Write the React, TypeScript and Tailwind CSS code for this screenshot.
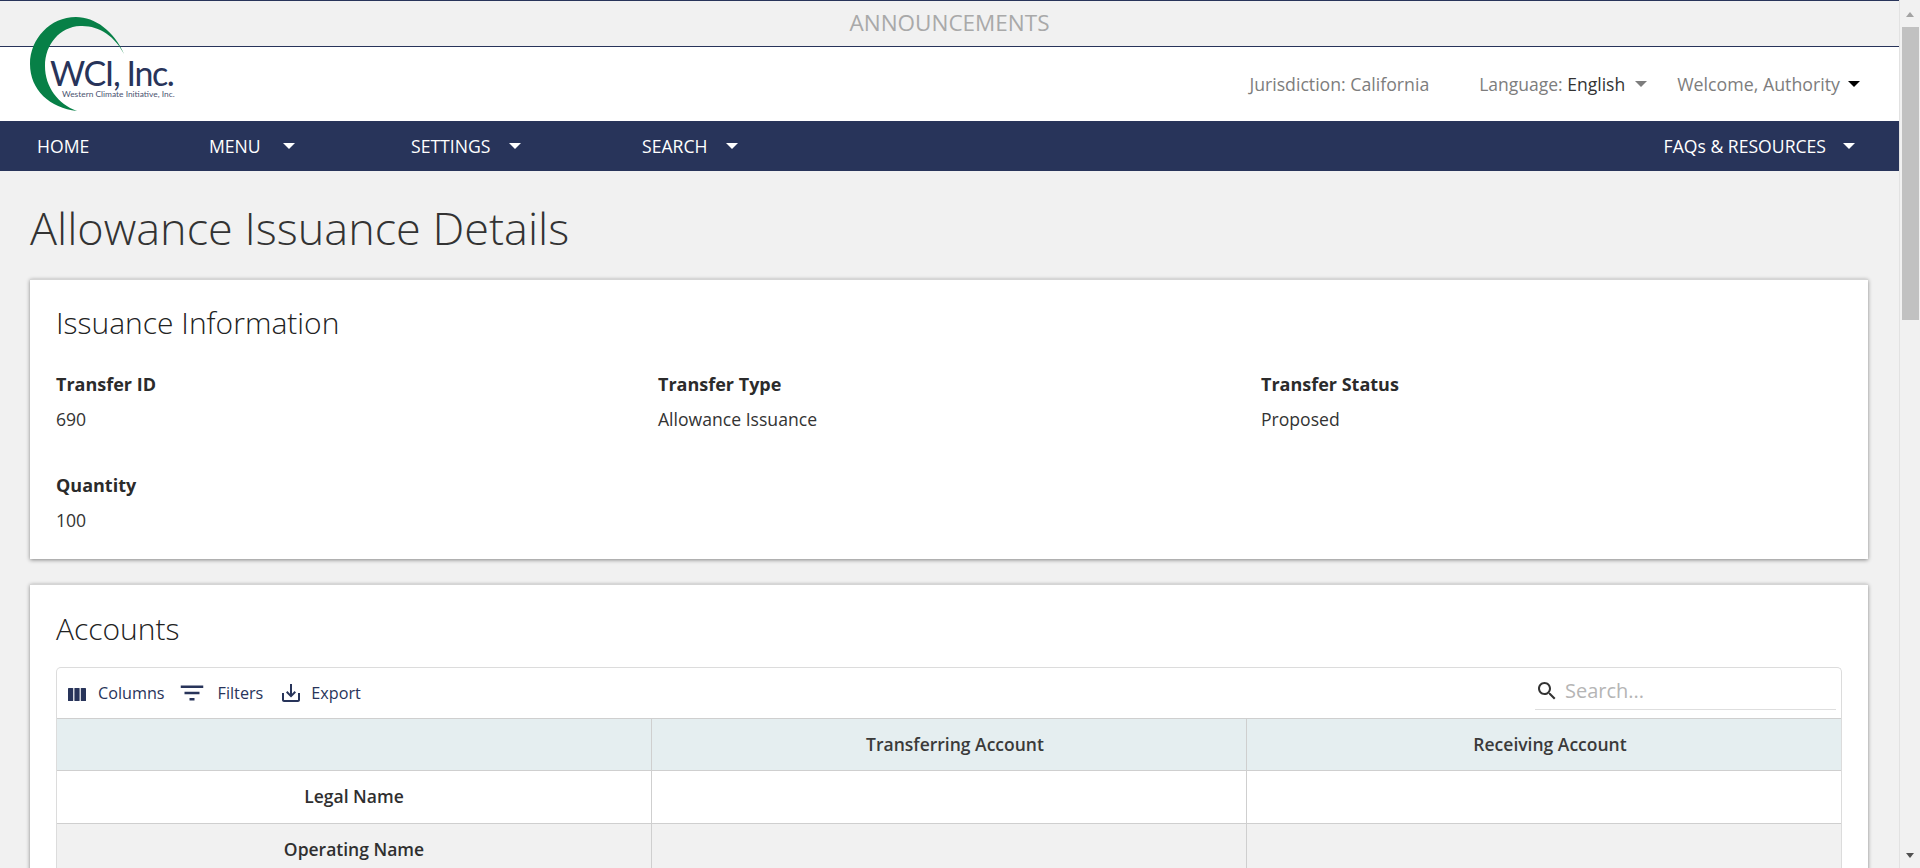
import React from 'react';

const Caret = ({ className = 'border-t-white' }: { className?: string }) => (
  <span className={`inline-block w-0 h-0 border-x-[6.5px] border-x-transparent border-t-[6.5px] ${className}`} />
);

const Logo = () => (
  <div className="absolute left-0 top-0 w-[190px] h-[120px]">
    <svg width="190" height="120" viewBox="0 0 190 120" className="absolute left-0 top-0">
      <path d="M124 54 C114 31 95 17 76 17 C50 17 30 39 30 64 C30 90 50 108 77 111 C58 104 45 87 45 66 C45 44 60 27 80 26 C98 25 115 36 124 54Z" fill="#078047" />
    </svg>
    <span className="absolute left-[50px] top-[57px] text-[34px] leading-[32px] font-['Lato',sans-serif] text-[#28345a] tracking-[-1.4px] whitespace-nowrap">WCI, Inc.</span>
    <span className="absolute left-[62px] top-[89px] text-[8.4px] leading-[11px] font-['Lato',sans-serif] text-[#4a5270] whitespace-nowrap">Western Climate Initiative, Inc.</span>
  </div>
);

const Field = ({ label, value }: { label: string; value: string }) => (
  <div className="h-[101px]">
    <div className="font-bold text-[18px] leading-[22px] text-[#2b2b2b]">{label}</div>
    <div className="mt-[13px] text-[17.6px] leading-[22px] text-[#333]">{value}</div>
  </div>
);

const Row = ({ label, shaded }: { label: string; shaded?: boolean }) => (
  <div className={`grid grid-cols-[595px_595px_1fr] h-[53px] border-b border-[#cfcfcf] text-[17.5px] ${shaded ? 'bg-[#f1f1f1]' : 'bg-white'}`}>
    <div className="flex items-center justify-center pb-[2px] font-semibold text-[#2f2f2f] border-r border-[#cfcfcf]">{label}</div>
    <div className="border-r border-[#cfcfcf]" />
    <div />
  </div>
);

export default function App() {
  return (
    <div className="relative flex h-screen overflow-hidden bg-[#f1f1f1] font-['Open_Sans',sans-serif]">
      <div className="relative flex-1 min-w-0 overflow-hidden">
        <div className="h-[47px] pb-[2px] border-y border-[#28345a] flex items-center justify-center text-[22.5px] text-[#a9a9a9]">ANNOUNCEMENTS</div>
        <header className="h-[74px] bg-white flex items-center justify-end pr-[39px] text-[17.8px] text-[#7d7d7d]">
          <span className="mr-[50px] text-[17.7px]">Jurisdiction: California</span>
          <span className="text-[17.5px]">Language: <span className="text-[#333]">English</span></span>
          <Caret className="border-t-[#7d7d7d] ml-[10px] mr-[30px]" />
          <span>Welcome, Authority</span>
          <Caret className="border-t-black ml-[8px]" />
        </header>
        <nav className="h-[50px] bg-[#28345a] flex items-center text-white text-[17.6px] pl-[37px] pr-[44px]">
          <span className="w-[172px]">HOME</span>
          <span className="w-[202px] flex items-center gap-[22px]">MENU <Caret /></span>
          <span className="w-[231px] flex items-center gap-[19px]">SETTINGS <Caret /></span>
          <span className="flex items-center gap-[19px]">SEARCH <Caret /></span>
          <span className="ml-auto flex items-center gap-[17px]">FAQs &amp; RESOURCES <Caret /></span>
        </nav>
        <main className="pl-[30px] pr-[31px]">
          <h1 className="pt-[30px] pb-[24px] text-[45px] leading-[54px] font-light text-[#333]">Allowance Issuance Details</h1>
          <section className="bg-white h-[280px] px-[26px] pt-[24px] border-t border-[#d5d5d5] shadow-[0_1px_4px_rgba(0,0,0,0.45)]">
            <h2 className="text-[30px] leading-[38px] font-light text-[#222]">Issuance Information</h2>
            <div className="mt-[31px] grid grid-cols-[602px_603px_1fr]">
              <Field label="Transfer ID" value="690" />
              <Field label="Transfer Type" value="Allowance Issuance" />
              <Field label="Transfer Status" value="Proposed" />
              <Field label="Quantity" value="100" />
            </div>
          </section>
          <section className="mt-[25px] bg-white px-[26px] pt-[25px] border-t border-[#d5d5d5] shadow-[0_1px_4px_rgba(0,0,0,0.45)]">
            <h2 className="text-[30px] leading-[38px] font-light text-[#222]">Accounts</h2>
            <div className="mt-[19px] border border-[#dcdcdc] rounded-t-[5px] border-b-0 w-[1786px]">
              <div className="h-[50px] flex items-center pl-[11px] pr-[5px] text-[#28345a] text-[16.2px]">
                <svg width="18" height="14" viewBox="0 0 18 14" className="mr-[12px] mt-[3px]" fill="#28345a">
                  <rect x="0" y="0" width="5.2" height="13" rx="0.6" />
                  <rect x="6.4" y="0" width="5.2" height="13" rx="0.6" />
                  <rect x="12.8" y="0" width="5.2" height="13" rx="0.6" />
                </svg>
                <span className="mt-[1px]">Columns</span>
                <svg width="30" height="30" viewBox="0 0 24 24" className="ml-[12px] mr-[11px]" fill="#28345a">
                  <path d="M10 18h4v-2h-4v2zM3 6v2h18V6H3zm3 7h12v-2H6v2z" />
                </svg>
                <span className="mt-[1px]">Filters</span>
                <svg width="24" height="24" viewBox="0 0 24 24" className="ml-[16px] mr-[8px]" fill="#28345a">
                  <path d="M19 12v7H5v-7H3v7c0 1.1.9 2 2 2h14c1.1 0 2-.9 2-2v-7h-2zm-6 .67l2.59-2.58L17 11.5l-5 5-5-5 1.41-1.41L11 12.67V3h2z" />
                </svg>
                <span className="mt-[1px]">Export</span>
                <div className="ml-auto w-[301px] h-[37px] border-b border-[#dedede] flex items-center -mt-[3px]">
                  <svg width="24" height="24" viewBox="0 0 24 24" fill="#333">
                    <path d="M15.5 14h-.79l-.28-.27C15.41 12.59 16 11.11 16 9.5 16 5.91 13.09 3 9.5 3S3 5.91 3 9.5 5.91 16 9.5 16c1.61 0 3.09-.59 4.23-1.57l.27.28v.79l5 4.99L20.49 19l-4.99-5zm-6 0C7.01 14 5 11.99 5 9.5S7.01 5 9.5 5 14 7.01 14 9.5 11.99 14 9.5 14z" />
                  </svg>
                  <span className="ml-[6px] text-[20px] text-[#b5b5b5]">Search...</span>
                </div>
              </div>
              <div className="grid grid-cols-[595px_595px_1fr] h-[53px] bg-[#e5eef0] border-y border-[#cfcfcf] text-[17.5px] font-semibold text-[#3a3a3a]">
                <div className="border-r border-[#cfcfcf]" />
                <div className="flex items-center justify-center pl-[12px] border-r border-[#cfcfcf]">Transferring Account</div>
                <div className="flex items-center justify-center pl-[12px]">Receiving Account</div>
              </div>
              <Row label="Legal Name" />
              <Row label="Operating Name" shaded />
            </div>
          </section>
        </main>
        <Logo />
      </div>
      <aside className="w-[21px] shrink-0 bg-[#f1f1f1] border-l border-[#e2e2e2] flex flex-col items-center">
        <span className="mt-[12px] w-0 h-0 border-x-[4px] border-x-transparent border-b-[5px] border-b-[#a3a3a3]" />
        <div className="mt-[10px] w-[17px] h-[293px] bg-[#c1c1c1]" />
        <span className="mt-auto mb-[10px] w-0 h-0 border-x-[4px] border-x-transparent border-t-[5px] border-t-[#505050]" />
      </aside>
    </div>
  );
}
